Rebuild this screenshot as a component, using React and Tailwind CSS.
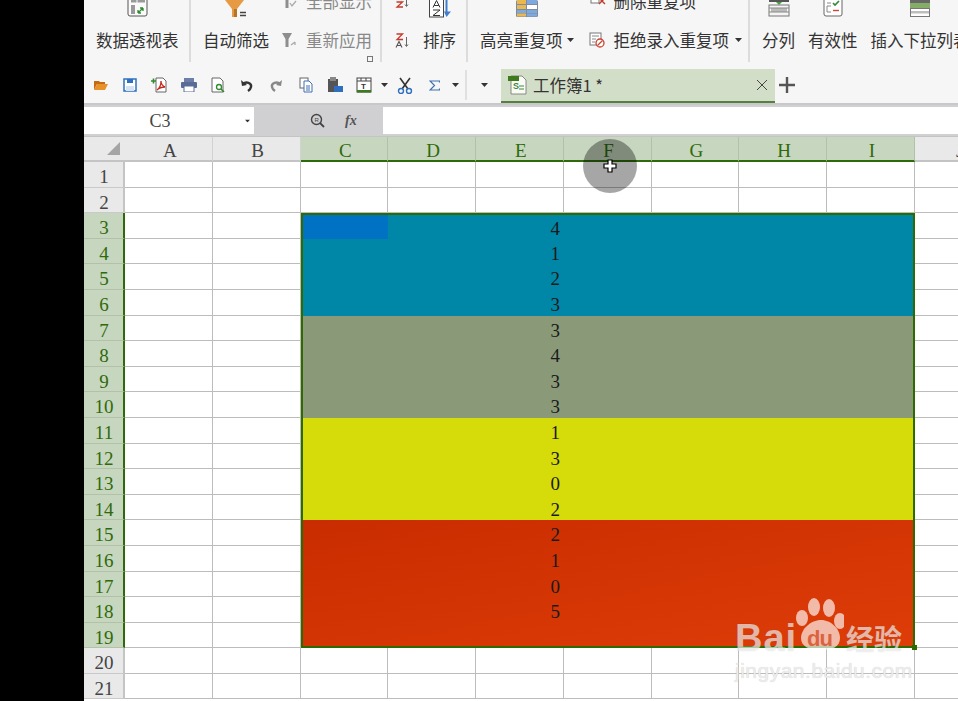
import React from "react";

const cjk = "font-['Noto_Sans_CJK_SC','Noto_Sans',sans-serif]";
const serif = "font-['Liberation_Serif','Noto_Sans_CJK_SC',serif]";

const columns = ["A", "B", "C", "D", "E", "F", "G", "H", "I", "J"];
const rows = Array.from({ length: 21 }, (_, i) => i + 1);

const bands = [
  { bg: "bg-[#0087a7]", values: [4, 1, 2, 3] },
  { bg: "bg-[#8a9a79]", values: [3, 4, 3, 3] },
  { bg: "bg-[#d5dc0a]", values: [1, 3, 0, 2] },
  { bg: "bg-linear-to-br from-[#c92c00] to-[#de3d08]", values: [2, 1, 0, 5, null] },
];

const Svg = ({ w = 18, h = 18, children, className = "" }) => (
  <svg width={w} height={h} viewBox={`0 0 ${w} ${h}`} className={`shrink-0 ${className}`} fill="none">
    {children}
  </svg>
);

const Caret = ({ className = "" }) => (
  <Svg w={7} h={4} className={className}>
    <path d="M0 0h7L3.5 4z" fill="#333" />
  </Svg>
);

const PivotIcon = () => (
  <Svg w={21} h={17}>
    <path d="M1 -2v16a2 2 0 0 0 2 2h15a2 2 0 0 0 2-2v-16" stroke="#555" fill="#fafafa" />
    <rect x="4" y="0" width="14" height="2.5" fill="#9a9a9a" />
    <path d="M10 0v3" stroke="#fafafa" />
    <rect x="4" y="5" width="4" height="9" fill="#999" />
    <path d="M11 13l5-5M16 8h-3M16 8v3M11 13h3M11 13v-3" stroke="#2f8a2f" strokeWidth="1.3" />
  </Svg>
);

const FunnelIcon = () => (
  <Svg w={23} h={17}>
    <path d="M0 0h19L12 9v8H7V9z" fill="#e69a44" />
    <path d="M9 9h3v8H9z" fill="#b9722a" />
    <path d="M15 12.5h6M15 15.5h6" stroke="#444" strokeWidth="1.3" />
  </Svg>
);

const SmallFunnel = ({ check }) => (
  <Svg w={16} h={16}>
    <path d="M1 1h10L7.5 7v8h-3V7z" fill="#8e8e8e" />
    {check ? (
      <path d="M9 10l2 3 4-5" stroke="#aaa" strokeWidth="1.3" />
    ) : (
      <path d="M10 13l4-3M14 13v-3" stroke="#aaa" strokeWidth="1.3" />
    )}
  </Svg>
);

const SortIcon = ({ desc }) => (
  <Svg w={15} h={15}>
    {desc ? (
      <>
        <path d="M1.5 1h6L2 6.5h6" stroke="#c8392b" strokeWidth="1.3" />
        <path d="M1 14.5l3-6 3 6M2.2 12.5h3.6" stroke="#555" strokeWidth="1.1" />
      </>
    ) : (
      <>
        <path d="M1 7l3-6 3 6M2.2 5h3.6" stroke="#555" strokeWidth="1.1" />
        <path d="M1.5 9h6L2 14h6" stroke="#c8392b" strokeWidth="1.3" />
      </>
    )}
    <path d="M11.5 4v9M10 11.5l1.5 2 1.5-2" stroke="#666" />
  </Svg>
);

const AzIcon = () => (
  <Svg w={22} h={18}>
    <rect x="0.5" y="-2" width="14" height="19" fill="#fff" stroke="#444" />
    <path d="M4 7.5l3.5-7 3.5 7M5.2 5.5h4.6" stroke="#333" />
    <path d="M4 10h7L4 15.5h7" stroke="#333" />
    <path d="M17.5 0v12" stroke="#3e7fd0" strokeWidth="2" />
    <path d="M15 11.5h7L17.5 17z" fill="#3e7fd0" />
  </Svg>
);

const HighlightIcon = () => (
  <Svg w={22} h={17}>
    <rect x="0" y="0" width="22" height="17" rx="1.5" fill="#7d8aa0" />
    <rect x="1" y="0" width="9" height="4" fill="#e9b84f" />
    <rect x="11" y="0" width="10" height="4" fill="#7fa8dc" />
    <rect x="1" y="5" width="9" height="4" fill="#e9b84f" />
    <rect x="11" y="5" width="10" height="4" fill="#fff" />
    <rect x="1" y="10" width="9" height="3" fill="#7fa8dc" />
    <rect x="11" y="10" width="10" height="3" fill="#7fa8dc" />
    <rect x="1" y="13.5" width="9" height="3" fill="#e9b84f" />
    <rect x="11" y="13.5" width="10" height="3" fill="#7fa8dc" />
  </Svg>
);

const DeleteDupIcon = () => (
  <Svg w={16} h={14}>
    <rect x="1" y="0" width="8" height="9" fill="#fff" stroke="#777" />
    <path d="M9 4l6 6M15 4l-6 6" stroke="#c0392b" strokeWidth="1.4" />
  </Svg>
);

const RejectIcon = () => (
  <Svg w={16} h={16}>
    <rect x="1" y="1" width="11" height="12" fill="#fff" stroke="#777" />
    <path d="M3 4h7M3 7h4M3 10h3" stroke="#888" />
    <circle cx="11" cy="11" r="4" fill="#fff" stroke="#c9442f" strokeWidth="1.3" />
    <path d="M8.5 13.5l5-5" stroke="#c9442f" strokeWidth="1.3" />
  </Svg>
);

const SplitIcon = () => (
  <Svg w={22} h={17}>
    <rect x="1" y="0" width="20" height="2" fill="#555" />
    <path d="M8 2h6l-3 3z" fill="#4aa03f" />
    <rect x="1" y="5" width="20" height="11" fill="#f4f4f4" stroke="#777" />
    <rect x="3" y="8" width="16" height="4" fill="#bbb" />
    <path d="M1 8h20M1 12h20" stroke="#888" />
  </Svg>
);

const ValidIcon = () => (
  <Svg w={20} h={17}>
    <path d="M1 -2v16a2 2 0 0 0 2 2h14a2 2 0 0 0 2-2v-16" fill="#fff" stroke="#666" />
    <path d="M10 3l2 2 4-4" stroke="#2f8a2f" strokeWidth="1.6" />
    <path d="M4 3h4M4 6h4M4 6v6h4" stroke="#888" />
    <path d="M10 10.5h6" stroke="#d0453a" strokeWidth="1.4" />
  </Svg>
);

const DropListIcon = () => (
  <Svg w={20} h={17}>
    <rect x="0" y="0" width="20" height="3" fill="#666" />
    <rect x="0" y="3" width="20" height="5" fill="#85ad68" />
    <rect x="0.5" y="8.5" width="19" height="8" fill="#fff" stroke="#777" />
    <rect x="1" y="11" width="18" height="2.5" fill="#bdbdbd" />
  </Svg>
);

const toolIcons = [
  <Svg key="open" w={16} h={14}>
    <path d="M1 3h5l1 1h5v2H4L1 12z" fill="#c46a12" />
    <path d="M4 6h11l-3 6H1z" fill="#e8902a" />
  </Svg>,
  <Svg key="save" w={14} h={14}>
    <rect x="1" y="1" width="12" height="12" stroke="#2f6fc0" strokeWidth="1.5" fill="#fff" />
    <rect x="4" y="1" width="6" height="4" fill="#2f6fc0" />
    <rect x="3" y="8" width="8" height="5" fill="#d4e2f4" />
  </Svg>,
  <Svg key="pdf" w={16} h={16}>
    <path d="M5 1h7l3 3v11H5z" fill="#fff" stroke="#666" />
    <path d="M6 13c3-2 4-6 4-9 0 3 2 5 4 6-3 0-6 1-8 3z" stroke="#c8281e" strokeWidth="1.3" />
    <path d="M0 4h5M2.5 1.5v5" stroke="#2f8a2f" strokeWidth="1.6" />
  </Svg>,
  <Svg key="print" w={16} h={14}>
    <rect x="3" y="0" width="10" height="4" fill="#6d7ea8" />
    <rect x="0" y="4" width="16" height="6" rx="1" fill="#5a6c96" />
    <rect x="3" y="8" width="10" height="6" fill="#fff" stroke="#5a6c96" />
  </Svg>,
  <Svg key="preview" w={14} h={16}>
    <path d="M1 1h8l3 3v11H1z" fill="#fff" stroke="#666" />
    <circle cx="8" cy="10" r="2.5" stroke="#2f8a2f" strokeWidth="1.3" />
    <path d="M10 12l3 3" stroke="#2f8a2f" strokeWidth="1.5" />
  </Svg>,
  <Svg key="undo" w={14} h={14}>
    <path d="M1 2l1 6 5-1" fill="#333" />
    <path d="M3 6c3-3 9-1 8 3-.4 2-1.5 3-3 4" stroke="#333" strokeWidth="2.4" />
  </Svg>,
  <Svg key="redo" w={14} h={14}>
    <path d="M13 2l-1 6-5-1" fill="#888" />
    <path d="M11 6C8 3 2 5 3 9c.4 2 1.5 3 3 4" stroke="#888" strokeWidth="2.4" />
  </Svg>,
  <Svg key="copy" w={14} h={16}>
    <rect x="1" y="1" width="8" height="10" fill="#fff" stroke="#666" />
    <path d="M5 4h5l3 3v8H5z" fill="#fff" stroke="#3e6fb0" />
    <path d="M7 9h4M7 11h4M7 13h4" stroke="#3e6fb0" />
  </Svg>,
  <Svg key="paste" w={16} h={16}>
    <rect x="1" y="2" width="10" height="13" fill="#555" />
    <rect x="3" y="0" width="6" height="4" fill="#888" />
    <rect x="7" y="9" width="9" height="6" fill="#2f6fc0" />
  </Svg>,
  <Svg key="format" w={16} h={16}>
    <rect x="1" y="1" width="14" height="14" fill="#fff" stroke="#444" />
    <path d="M1 4h14M5 1v3M10 1v3" stroke="#444" />
    <rect x="1" y="13" width="14" height="2.5" fill="#3c7a1e" />
    <text x="5" y="12" fontSize="8" fontFamily="Liberation Sans" fontWeight="700" fill="#333">T</text>
  </Svg>,
];

const TabIcon = () => (
  <Svg w={20} h={20}>
    <path d="M3 1h11l4 4v14H3z" fill="#fbfbf6" stroke="#888" />
    <rect x="0" y="1" width="11" height="5" fill="#3c7a1e" />
    <text x="5" y="14" fontSize="9" fontWeight="700" fontFamily="Liberation Sans" fill="#3c8a3c">S</text>
    <path d="M11 11h5M11 14h5" stroke="#3c8a3c" />
  </Svg>
);

const TallButton = ({ icon, label, className = "" }) => (
  <div className={`flex flex-col items-center shrink-0 ${className}`}>
    <div className="h-[17px] flex items-start">{icon}</div>
    <div className="mt-[12px] flex items-center gap-[4px] text-[16.5px] leading-[22px] whitespace-nowrap">{label}</div>
  </div>
);

const Ribbon = () => (
  <div className={`h-[67px] bg-[#f6f6f6] flex overflow-hidden text-[#333] ${cjk}`}>
    <div className="w-[107px] shrink-0 h-[62px] border-r-2 border-[#dcdcdc] flex pl-[12px]">
      <TallButton icon={<PivotIcon />} label="数据透视表" />
    </div>
    <div className="w-[191px] shrink-0 h-[62px] border-r-2 border-[#dcdcdc] flex pl-[12px] relative">
      <TallButton icon={<FunnelIcon />} label="自动筛选" />
      <div className="ml-[12px] -mt-[10px] flex flex-col gap-[17px] text-[#888] text-[16.5px] leading-[22px]">
        <div className="flex items-center gap-[9px] whitespace-nowrap"><SmallFunnel check />全部显示</div>
        <div className="flex items-center gap-[9px] whitespace-nowrap"><SmallFunnel />重新应用</div>
      </div>
      <div className="absolute right-[7px] bottom-[0px] size-[6px] border border-[#777]" />
    </div>
    <div className="w-[86px] shrink-0 h-[62px] border-r-2 border-[#dcdcdc] flex pl-[13px]">
      <div className="flex flex-col -mt-[7px] gap-[25px]">
        <SortIcon />
        <SortIcon desc />
      </div>
      <TallButton icon={<AzIcon />} label="排序" className="ml-[13px]" />
    </div>
    <div className="w-[282px] shrink-0 h-[62px] border-r-2 border-[#dcdcdc] flex pl-[12px]">
      <TallButton icon={<HighlightIcon />} label={<>高亮重复项<Caret /></>} />
      <div className="ml-[15px] -mt-[10px] flex flex-col gap-[17px] text-[16.5px] leading-[22px]">
        <div className="flex items-center gap-[8px] pl-[1px] whitespace-nowrap"><DeleteDupIcon />删除重复项</div>
        <div className="flex items-center gap-[9px] whitespace-nowrap"><RejectIcon />拒绝录入重复项<Caret className="ml-[-3px]" /></div>
      </div>
    </div>
    <div className="flex pl-[12px] gap-[13px]">
      <TallButton icon={<SplitIcon />} label="分列" />
      <TallButton icon={<ValidIcon />} label="有效性" />
      <TallButton icon={<DropListIcon />} label="插入下拉列表" />
    </div>
  </div>
);

const Toolbar = () => (
  <div className={`h-[36px] bg-[#f6f6f6] flex items-end text-[#333] ${cjk}`}>
    <div className="h-[36px] flex items-center pl-[2px]">
      {toolIcons.map((icon) => (
        <div key={icon.key} className="w-[29.3px] flex justify-center">{icon}</div>
      ))}
      <Caret className="ml-[2px]" />
      <div className="w-[29px] ml-[3px] flex justify-center">
        <Svg w={16} h={17}>
          <path d="M3 1l8 11M13 1L5 12" stroke="#333" strokeWidth="1.6" />
          <circle cx="4" cy="14" r="2.5" stroke="#2f6fc0" strokeWidth="1.4" />
          <circle cx="12" cy="14" r="2.5" stroke="#2f6fc0" strokeWidth="1.4" />
        </Svg>
      </div>
      <div className="w-[29px] flex justify-center">
        <Svg w={11} h={11}>
          <path d="M10.5 2.5V1H1l4.5 4.5L1 10h9.5V8.5" stroke="#3e6fb0" strokeWidth="1.2" />
        </Svg>
      </div>
      <Caret className="ml-[3px]" />
      <div className="ml-[6px] h-[30px] border-l-2 border-[#e0e0e0]" />
      <Caret className="ml-[14px]" />
    </div>
    <div className="ml-[13px] w-[274px] h-[34px] bg-[#d3dec9] border-b-2 border-[#55803f] flex items-center pl-[7px] pr-[8px]">
      <TabIcon />
      <span className="ml-[5px] text-[16.5px] whitespace-nowrap">工作簿1 *</span>
      <Svg w={10} h={10} className="ml-auto">
        <path d="M0 0l10 10M10 0L0 10" stroke="#444" />
      </Svg>
    </div>
    <div className="h-[36px] flex items-center ml-[4px]">
      <Svg w={16} h={16}>
        <path d="M8 0v16M0 8h16" stroke="#555" strokeWidth="2.4" />
      </Svg>
    </div>
  </div>
);

const FormulaBar = () => (
  <div className="h-[34px] bg-[#d0d0d2] border-t-2 border-[#c8c8ca] flex pt-[2px] pb-[2px] border-b border-b-[#c4c4c4]">
    <div className={`w-[170px] bg-white flex items-center relative justify-center pr-[18px] pt-[2px] text-[18px] text-[#444] ${serif}`}>
      C3
      <Caret className="absolute right-[3px] top-[12px] scale-75" />
    </div>
    <div className="w-[129px] flex items-center pl-[56px] gap-[20px]">
      <Svg w={15} h={15}>
        <circle cx="6.5" cy="6.5" r="5" stroke="#444" strokeWidth="1.4" />
        <path d="M10 10l4 4" stroke="#444" strokeWidth="1.8" />
        <text x="4.4" y="9" fontSize="6" fontFamily="Liberation Sans" fill="#444">R</text>
      </Svg>
      <span className={`text-[14px] italic font-bold text-[#555] ${serif}`}>fx</span>
    </div>
    <div className="flex-1 bg-white" />
  </div>
);

const Sheet = () => (
  <div className={`relative grid grid-cols-[41px_repeat(10,87.75px)] grid-rows-[25px_repeat(21,25.6px)] text-[19px] ${serif}`}>
    <div className="bg-[#e9e9e9] border-b-2 border-[#c4c4c4] flex items-end justify-end pr-[5px] pb-[5px]">
      <Svg w={13} h={13}>
        <path d="M13 0v13H0z" fill="#a5a5a5" />
      </Svg>
    </div>
    {columns.map((col, i) => {
      const selected = i >= 2 && i <= 8;
      return (
        <div
          key={col}
          className={`flex items-center justify-center pt-[6px] pl-[3px] border-r border-b-2 ${
            selected
              ? "bg-[#c7d6bf] text-[#2f6a0a] border-r-[#b2c2a8] border-b-[#2f6a0a]"
              : "bg-[#e9e9e9] text-[#444] border-r-[#d2d2d2] border-b-[#c4c4c4]"
          }`}
        >
          {col}
        </div>
      );
    })}
    {rows.map((row) => {
      const selected = row >= 3 && row <= 19;
      return (
        <React.Fragment key={row}>
          <div
            className={`flex items-center justify-center pt-[6px] pl-[1px] border-b ${
              selected
                ? "bg-[#c7d6bf] text-[#2f6a0a] border-r-2 border-r-[#2f6a0a] border-b-[#b2c2a8]"
                : "bg-[#e9e9e9] text-[#444] border-r-2 border-r-[#c4c4c4] border-b-[#c9c9c9]"
            }`}
          >
            {row}
          </div>
          {columns.map((col, i) => {
            if (selected && i >= 2 && i <= 8) {
              // C3:I19 is filled as one block, placed once on row 3
              if (row !== 3 || i !== 2) return null;
              return (
                <div key={col} className="col-span-7 row-span-17 relative outline-2 -outline-offset-2 outline-[#2d6a00]">
                  <div className="flex flex-col h-full">
                    {bands.map((band, b) => (
                      <div key={b} className={`${band.bg} ${band.values.length === 5 ? "flex-1" : "h-[102.4px]"}`}>
                        {band.values.map((v, k) => (
                          <div key={k} className="h-[25.6px] flex text-[#1a1a1a]">
                            {b === 0 && k === 0 ? (
                              <>
                                <div className="ml-[2px] mt-[2px] w-[85.5px] bg-[#0072c4]" />
                                <div className="w-[172px] text-right leading-[31px]">{v}</div>
                              </>
                            ) : (
                              <div className="w-[259.5px] text-right leading-[30px]">{v}</div>
                            )}
                          </div>
                        ))}
                      </div>
                    ))}
                  </div>
                  <div className="absolute -right-[2px] -bottom-[2px] size-[5px] bg-[#2d6a00]" />
                </div>
              );
            }
            return <div key={col} className="border-r border-b border-[#bcbcbc] bg-white" />;
          })}
        </React.Fragment>
      );
    })}
  </div>
);

const Watermark = () => (
  <div className="absolute left-[735px] top-[598px] w-[180px] h-[84px] text-white/65 font-['Liberation_Sans',sans-serif] [text-shadow:0_0_1px_rgba(0,0,0,0.2)]">
    <div className="absolute left-0 top-[20px] text-[38px] leading-[40px] font-bold tracking-[1px]">Bai</div>
    <svg width="50" height="54" viewBox="0 0 50 54" className="absolute left-[59px] top-0 fill-white/65">
      <ellipse cx="20" cy="9" rx="6" ry="9" />
      <ellipse cx="35" cy="10" rx="6" ry="9" />
      <ellipse cx="8" cy="20" rx="6" ry="8" />
      <ellipse cx="46" cy="23" rx="6" ry="8" />
      <path d="M27 22c10 0 19 9 19 18 0 9-8 12-19 12S7 49 7 40c0-9 10-18 20-18z" />
    </svg>
    <div className="absolute left-[72px] top-[29px] text-[22px] leading-[24px] font-bold text-[#d9643f] tracking-[-1px] [text-shadow:none]">du</div>
    <div className={`absolute left-[111px] top-[24px] text-[28px] leading-[32px] font-bold whitespace-nowrap ${cjk}`}>经验</div>
    <div className="absolute left-0 top-[61px] text-[21px] leading-[24px] tracking-[0.5px] whitespace-nowrap text-[#ececec]">jingyan.baidu.com</div>
  </div>
);

const Spotlight = () => (
  <div className="absolute left-[583px] top-[139px] size-[54px] rounded-full bg-black/35 flex items-center justify-center">
    <svg width="14" height="14" viewBox="0 0 14 14">
      <path d="M5 1h4v4h4v4H9v4H5V9H1V5h4z" fill="#fff" stroke="#000" strokeWidth="1.2" />
    </svg>
  </div>
);

export default function App() {
  return (
    <div className="relative w-[958px] h-[701px] bg-black overflow-hidden flex">
      <div className="w-[84px] shrink-0 bg-black" />
      <div className="flex-1 min-w-0 overflow-hidden flex flex-col bg-white">
        <Ribbon />
        <Toolbar />
        <FormulaBar />
        <Sheet />
      </div>
      <Spotlight />
      <Watermark />
    </div>
  );
}
